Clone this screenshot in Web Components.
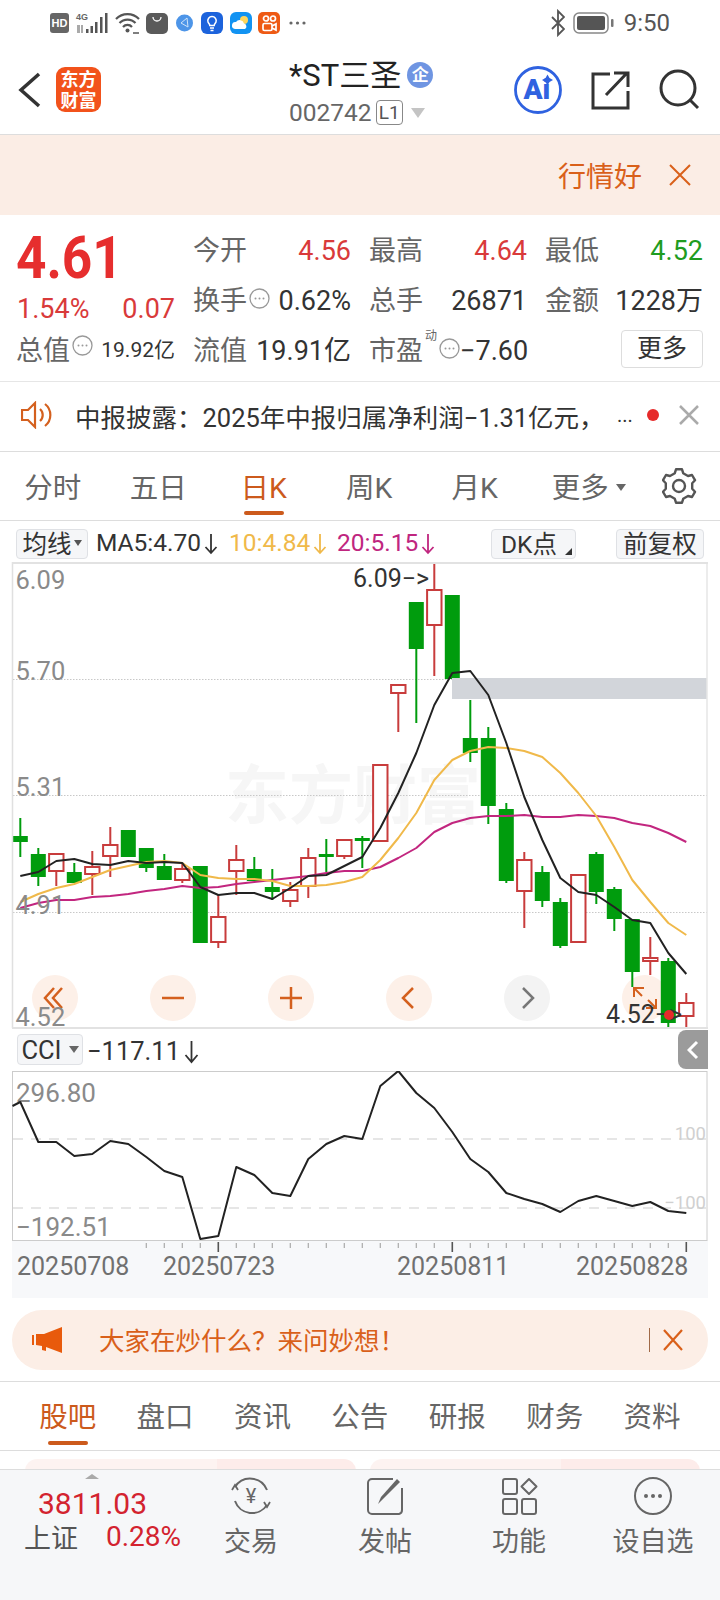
<!DOCTYPE html>
<html lang="zh-CN">
<head>
<meta charset="utf-8">
<title>*ST三圣</title>
<style>
  html, body { margin: 0; padding: 0; background: #fff; }
  body {
    width: 720px; height: 1600px; overflow: hidden;
    font-family: Roboto, "Noto Sans CJK SC", sans-serif;
    color: #333;
  }
</style>
</head>
<body>
<status-bar></status-bar>
<stock-header></stock-header>
<promo-strip></promo-strip>
<quote-panel></quote-panel>
<notice-row></notice-row>

<tab-strip gear style="--tab-top:17px;--bar-gap:2px">
  <tab-item>分时</tab-item>
  <tab-item>五日</tab-item>
  <tab-item active>日K</tab-item>
  <tab-item>周K</tab-item>
  <tab-item>月K</tab-item>
  <tab-item>更多<i style="display:inline-block;width:0;height:0;margin:0 -17px 5px 7px;vertical-align:middle;border:5px solid transparent;border-top:7px solid #666;border-bottom:0"></i></tab-item>
</tab-strip>

<chart-toolbar></chart-toolbar>
<kline-chart></kline-chart>
<cci-head></cci-head>
<cci-chart></cci-chart>
<ask-banner></ask-banner>

<tab-strip style="--tab-w:97.4px;--tab-pad:19px;--tab-top:16px;--bar-gap:3px">
  <tab-item active>股吧</tab-item>
  <tab-item>盘口</tab-item>
  <tab-item>资讯</tab-item>
  <tab-item>公告</tab-item>
  <tab-item>研报</tab-item>
  <tab-item>财务</tab-item>
  <tab-item>资料</tab-item>
</tab-strip>

<card-peek></card-peek>

<bottom-nav>
  <nav-item>
    <svg slot="icon" width="44" height="40" viewBox="0 0 44 40" fill="none" stroke="#666" stroke-width="2">
      <path d="M6 11A18 18 0 0 1 38 14M38 29A18 18 0 0 1 6 25"/>
      <path d="M3 14l3-5 3 5M35 26l3 5 3-5" stroke-width="1.8"/>
      <text x="22" y="27" text-anchor="middle" font-size="20" fill="#666" stroke="none" font-family="Roboto">¥</text>
    </svg>
    交易
  </nav-item>
  <nav-item>
    <svg slot="icon" width="40" height="40" viewBox="0 0 40 40" fill="none" stroke="#666" stroke-width="2">
      <path d="M28 3H7a4 4 0 0 0-4 4v27a4 4 0 0 0 4 4h27a4 4 0 0 0 3-4V12"/>
      <path d="M13 28l3-7 16-18 3 3-17 17z" fill="#666" stroke="none"/>
    </svg>
    发帖
  </nav-item>
  <nav-item>
    <svg slot="icon" width="40" height="40" viewBox="0 0 40 40" fill="none" stroke="#666" stroke-width="2">
      <rect x="4" y="3" width="14" height="15" rx="2"/>
      <rect x="4" y="23" width="14" height="15" rx="2"/>
      <rect x="23" y="23" width="14" height="15" rx="2"/>
      <path d="M30 3l7.500 7.500-7.500 7.500-7.500-7.500z" stroke-linejoin="round"/>
    </svg>
    功能
  </nav-item>
  <nav-item>
    <svg slot="icon" width="40" height="40" viewBox="0 0 40 40" fill="none" stroke="#666" stroke-width="2">
      <circle cx="20" cy="20" r="18"/>
      <g fill="#666" stroke="none"><circle cx="13" cy="20" r="2"/><circle cx="20" cy="20" r="2"/><circle cx="27" cy="20" r="2"/></g>
    </svg>
    设自选
  </nav-item>
</bottom-nav>

<script>
const BASE_FONT = `font-family: Roboto, "Noto Sans CJK SC", sans-serif;`;

// Shared base: renders a static html string into an open shadow root
class ShadowBlock extends HTMLElement {
  connectedCallback() {
    if (this.shadowRoot) return;
    this.attachShadow({ mode: 'open' });
    this.shadowRoot.innerHTML = this.render();
  }
  render() { return ''; }
}

// ============================================================
// <status-bar>: system icons and clock
// ============================================================
class StatusBar extends ShadowBlock {
  render() {
    return `
      <style>
        :host { display: flex; align-items: center; height: 45px; padding-left: 50px; ${BASE_FONT} }
        svg { display: block; flex: none; }
        .hd {
          width: 19px; height: 20px; border-radius: 3px; background: #666; color: #fff;
          font: 700 11px/20px "Liberation Sans", sans-serif; text-align: center;
        }
        .net { position: relative; width: 33px; height: 22px; margin-left: 7px; }
        .net b { position: absolute; left: 0; top: 0; font: 700 9px/10px "Liberation Sans", sans-serif; color: #666; }
        .net svg { position: absolute; left: 0; top: 0; }
        .clock { margin-left: 10px; font-size: 24px; color: #555; }
        .clock-wrap { margin-left: auto; margin-right: 50px; display: flex; align-items: center; }
      </style>
      <div class="hd">HD</div>
      <div class="net"><b>4G</b>
        <svg width="33" height="22" fill="#555">
          <rect x="1" y="13" width="3" height="8" fill="#aaa"/><rect x="5" y="13" width="2" height="8" fill="#aaa"/>
          <rect x="10" y="17" width="2.500" height="4"/><rect x="14.500" y="14" width="2.500" height="7"/>
          <rect x="19" y="10" width="2.500" height="11"/><rect x="24" y="5" width="2.500" height="16"/><rect x="29" y="1" width="2.500" height="20"/>
        </svg>
      </div>
      <svg style="margin-left:6px" width="25" height="22" fill="none" stroke="#555" stroke-width="2.200">
        <path d="M1 7a16 16 0 0 1 23 0M4.500 11a11 11 0 0 1 16 0M8 15a6 6 0 0 1 9 0"/>
        <circle cx="12.500" cy="18.500" r="2" fill="#555" stroke="none"/>
        <path d="M18 21h6" stroke-width="1.500"/>
      </svg>
      <svg style="margin-left:6px" width="22" height="22">
        <path d="M5 1h12a5 5 0 0 1 5 5v11a5 5 0 0 1-5 5H5a5 5 0 0 1-5-5V6a5 5 0 0 1 5-5z" fill="#5a5a5a"/>
        <path d="M7 5a4 4 0 0 0 8 0" fill="none" stroke="#fff" stroke-width="1.300"/>
      </svg>
      <svg style="margin-left:8px" width="17" height="20">
        <circle cx="8.500" cy="10" r="8.500" fill="#4d95e8"/>
        <path d="M11 5L5 10l7 4z" fill="none" stroke="#cfe4fa" stroke-width="1"/>
      </svg>
      <svg style="margin-left:8px" width="22" height="22">
        <rect width="22" height="22" rx="6" fill="#1c63dc"/>
        <path d="M7 10a4.200 4.200 0 1 1 8 0c-.5 1.500-1.800 2-1.800 3.500h-4.400C8.800 12 7.500 11.500 7 10zM9 16h4M9.500 18.500h3" fill="none" stroke="#fff" stroke-width="1.500"/>
      </svg>
      <svg style="margin-left:7px" width="22" height="22">
        <rect width="22" height="22" rx="6" fill="#1293f2"/>
        <circle cx="14" cy="8" r="4" fill="#ffd65c"/>
        <path d="M5 17a3.500 3.500 0 0 1 1-7 4.500 4.500 0 0 1 8 1.500A3 3 0 0 1 15 17z" fill="#fff"/>
      </svg>
      <svg style="margin-left:6px" width="22" height="22">
        <rect width="22" height="22" rx="5" fill="#ee5a14"/>
        <g fill="none" stroke="#fff" stroke-width="1.700">
          <circle cx="8" cy="6.500" r="2.500"/><circle cx="15" cy="6.500" r="2.500"/>
          <rect x="5" y="11.500" width="9" height="7" rx="1.500"/><path d="M14 14l4-2v6l-4-2"/>
        </g>
      </svg>
      <svg style="margin-left:9px" width="17" height="6" fill="#666">
        <circle cx="2" cy="3" r="1.600"/><circle cx="8.500" cy="3" r="1.600"/><circle cx="15" cy="3" r="1.600"/>
      </svg>
      <div class="clock-wrap">
        <svg width="14" height="28" fill="none" stroke="#555" stroke-width="1.800">
          <path d="M1 8l12 12-6 6V2l6 6L1 20"/>
        </svg>
        <svg style="margin-left:8px" width="41" height="22">
          <rect x="1" y="1" width="34" height="20" rx="5" fill="none" stroke="#888" stroke-width="1.500"/>
          <rect x="4" y="4" width="28" height="14" rx="2" fill="#555"/>
          <rect x="38" y="7" width="2.500" height="8" rx="1" fill="#777"/>
        </svg>
        <div class="clock">9:50</div>
      </div>
    `;
  }
}
customElements.define('status-bar', StatusBar);

// ============================================================
// <stock-header>: back button, logo, stock name, actions
// ============================================================
class StockHeader extends ShadowBlock {
  render() {
    return `
      <style>
        :host {
          display: flex; align-items: center; position: relative; height: 89px;
          border-bottom: 1px solid #ddd; padding-left: 18px; box-sizing: content-box; ${BASE_FONT}
        }
        svg { display: block; flex: none; }
        .logo {
          width: 45px; height: 45px; margin-left: 15px; border-radius: 9px; background: #f2521b; color: #fff;
          font-size: 18px; font-weight: 700; line-height: 21px; text-align: center;
          display: flex; align-items: center; justify-content: center; flex: none;
        }
        .mid { width: 200px; margin-left: 188px; flex: none; }
        .name { display: flex; align-items: center; height: 38px; margin-top: 5px; font-size: 31px; color: #222; line-height: 38px; }
        .ent {
          width: 26px; height: 26px; border-radius: 50%; background: #6f95e2; color: #fff; margin: 0 0 1px 6px;
          font-size: 17px; font-weight: 700; line-height: 26px; text-align: center;
        }
        .code { display: flex; align-items: center; height: 30px; margin-top: 3px; font-size: 24.500px; color: #666; }
        .lv {
          width: 25px; height: 23px; margin-left: 4px; border: 1px solid #888; border-radius: 4px;
          font-size: 19px; line-height: 23px; text-align: center; color: #555;
        }
        .tri { width: 0; height: 0; margin-left: 8px; border: 7.500px solid transparent; border-top: 10px solid #c4c4c4; border-bottom: 0; }
      </style>
      <svg width="23" height="36" fill="none" stroke="#333" stroke-width="3.500"><path d="M21 2L3 18l18 16"/></svg>
      <div class="logo">东方<br>财富</div>
      <div class="mid">
        <div class="name">*ST三圣<span class="ent">企</span></div>
        <div class="code">002742<span class="lv">L1</span><span class="tri"></span></div>
      </div>
      <svg style="margin-left:24px" width="50" height="50" fill="none">
        <circle cx="25" cy="25" r="22.500" stroke="#2f62e0" stroke-width="2.800"/>
        <text x="10.500" y="34" font-family="Roboto" font-weight="900" font-size="28" fill="#2f62e0">Ai</text>
        <path d="M34.500 9.500l2 3.500 3.500 2-3.500 2-2 3.500-2-3.500-3.500-2 3.500-2z" fill="#2f62e0"/>
      </svg>
      <svg style="margin-left:27px" width="40" height="40" fill="none" stroke="#333" stroke-width="3">
        <path d="M20 4H3v34h35V21M16 25L37 3M24 3h14v14"/>
      </svg>
      <svg style="margin-left:29px" width="42" height="42" fill="none" stroke="#333" stroke-width="3">
        <circle cx="19" cy="19" r="17"/><path d="M31 31l8 8"/>
      </svg>
    `;
  }
}
customElements.define('stock-header', StockHeader);

// ============================================================
// <promo-strip>: market sentiment bar
// ============================================================
class PromoStrip extends ShadowBlock {
  render() {
    return `
      <style>
        :host {
          display: flex; align-items: center; justify-content: flex-end; height: 80px; background: #fbede5;
          padding-right: 29px; color: #d9601a; font-size: 28px; ${BASE_FONT}
        }
        svg { display: block; margin-left: 27px; }
      </style>
      <span>行情好</span>
      <svg width="22" height="22" fill="none" stroke="#d9601a" stroke-width="2"><path d="M1 1l20 20M21 1L1 21"/></svg>
    `;
  }
}
customElements.define('promo-strip', PromoStrip);

// ============================================================
// <quote-panel>: last price plus the fundamentals grid
// ============================================================
class QuotePanel extends ShadowBlock {
  render() {
    const more = `<svg class="dot" width="21" height="21" fill="none" stroke="#999" stroke-width="1.300"><circle cx="10.500" cy="10.500" r="9.500"/><g fill="#999" stroke="none"><circle cx="6.500" cy="10.500" r="1"/><circle cx="10.500" cy="10.500" r="1"/><circle cx="14.500" cy="10.500" r="1"/></g></svg>`;
    const cell = (label, value, cls = '') =>
      `<div class="cell"><span class="lab">${label}</span><span class="val ${cls}">${value}</span></div>`;
    return `
      <style>
        :host {
          display: grid; grid-template-columns: repeat(4, 158px); column-gap: 18px; grid-auto-rows: 50px;
          height: 155px; padding: 11px 0 0 17px; border-bottom: 1px solid #e6e6e6; box-sizing: content-box; ${BASE_FONT}
        }
        .left { grid-row: 1 / 4; grid-column: 1; display: flex; flex-direction: column; }
        .price {
          height: 64px; line-height: 64px; font-size: 59px; font-weight: 700; color: #e62e2e;
          transform: scaleX(.9); transform-origin: left center; margin-left: -1px;
        }
        .chg { display: flex; justify-content: space-between; height: 38px; line-height: 38px; font-size: 27px; color: #d93a3a; }
        .cap { display: flex; align-items: center; height: 40px; font-size: 27px; color: #666; margin-left: -1px; }
        .cap .small { margin-left: auto; font-size: 21px; color: #333; }
        .cell { display: flex; align-items: center; justify-content: space-between; font-size: 27px; line-height: 49px; }
        .lab { color: #666; display: flex; align-items: center; white-space: nowrap; }
        .val { color: #333; white-space: nowrap; }
        .up { color: #d93a3a; }
        .down { color: #1f9c1f; }
        .dot { display: block; flex: none; margin: -6px 0 0 2px; }
        sup { font-size: 12px; line-height: 12px; color: #666; align-self: flex-start; margin: 3px 0 0 2px; }
        .btn {
          width: 80px; height: 36px; margin: -5px 0 0 auto; border: 1px solid #ddd; border-radius: 4px;
          font-size: 25px; line-height: 36px; text-align: center; color: #333;
        }
      </style>
      <div class="left">
        <div class="price">4.61</div>
        <div class="chg"><span>1.54%</span><span>0.07</span></div>
        <div class="cap">总值${more}<span class="small">19.92亿</span></div>
      </div>
      ${cell('今开', '4.56', 'up')}
      ${cell('最高', '4.64', 'up')}
      ${cell('最低', '4.52', 'down')}
      ${cell('换手' + more, '0.62%')}
      ${cell('总手', '26871')}
      ${cell('金额', '1228万')}
      ${cell('流值', '19.91亿')}
      ${cell('市盈<sup>动</sup>' + more, '−7.60')}
      <div class="cell"><div class="btn">更多</div></div>
    `;
  }
}
customElements.define('quote-panel', QuotePanel);

// ============================================================
// <notice-row>: scrolling announcement
// ============================================================
class NoticeRow extends ShadowBlock {
  render() {
    return `
      <style>
        :host {
          display: flex; align-items: center; padding: 0 0 3px 21px; box-sizing: border-box;
          height: 70px; border-bottom: 1px solid #ddd; font-size: 25.500px; color: #333; ${BASE_FONT}
        }
        svg { display: block; flex: none; }
        .txt { margin-left: 22px; white-space: nowrap; width: 521px; flex: none; }
        .dots { margin-left: 21px; width: 15px; flex: none; font-size: 20px; }
        .red { width: 12px; height: 12px; border-radius: 50%; background: #e62a2a; margin-left: 15px; flex: none; }
      </style>
      <svg width="32" height="28" fill="none" stroke="#d4601e" stroke-width="2.200">
        <path d="M1 9h6l7-7v24l-7-7H1zM19 8a8 8 0 0 1 0 12M24 3a14 14 0 0 1 0 22"/>
      </svg>
      <div class="txt">中报披露：2025年中报归属净利润−1.31亿元，</div>
      <div class="dots">...</div>
      <div class="red"></div>
      <svg style="margin-left:20px" width="20" height="20" fill="none" stroke="#aaa" stroke-width="2.500"><path d="M1 1l18 18M19 1L1 19"/></svg>
    `;
  }
}
customElements.define('notice-row', NoticeRow);

// ============================================================
// <tab-strip> + <tab-item>: horizontal tabs, content via slots
// ============================================================
function gearPath(cx, cy, outer, inner, teeth) {
  let d = '';
  const step = Math.PI * 2 / teeth;
  for (let i = 0; i < teeth; i++) {
    const a = -Math.PI / 2 + i * step;
    const pts = [[a - step * .17, outer], [a + step * .17, outer], [a + step * .3, inner], [a + step * .7, inner]];
    pts.forEach(([t, r], k) => {
      d += (i === 0 && k === 0 ? 'M' : 'L') + (cx + r * Math.cos(t)).toFixed(1) + ' ' + (cy + r * Math.sin(t)).toFixed(1);
    });
  }
  return d + 'z';
}

class TabStrip extends ShadowBlock {
  render() {
    const gear = this.hasAttribute('gear')
      ? `<svg width="36" height="38" fill="none" stroke="#555" stroke-width="2.400" stroke-linejoin="round">
           <path d="${gearPath(17, 18, 17, 13.5, 6)}"/><circle cx="17" cy="18" r="6"/>
         </svg>`
      : '';
    return `
      <style>
        :host {
          display: flex; height: 68px; padding-left: var(--tab-pad, 0); position: relative;
          border-bottom: 1px solid #ddd; ${BASE_FONT}
        }
        svg { display: block; margin: 16px 0 0 29px; flex: none; }
      </style>
      <slot></slot>${gear}
    `;
  }
}
customElements.define('tab-strip', TabStrip);

class TabItem extends ShadowBlock {
  render() {
    return `
      <style>
        :host {
          display: flex; flex-direction: column; align-items: center; flex: none;
          width: var(--tab-w, 105.500px); padding-top: var(--tab-top, 15px); box-sizing: border-box;
          font-size: 28.500px; line-height: 40px; color: #666;
        }
        :host([active]) { color: #cc5a1c; }
        .bar { width: 40px; height: 4px; margin-top: var(--bar-gap, 4px); border-radius: 2px; }
        :host([active]) .bar { background: #cc5a1c; }
      </style>
      <div><slot></slot></div>
      <div class="bar"></div>
    `;
  }
}
customElements.define('tab-item', TabItem);

// ============================================================
// <chart-toolbar>: indicator selector and moving average values
// ============================================================
class ChartToolbar extends ShadowBlock {
  render() {
    return `
      <style>
        :host {
          display: flex; align-items: center; height: 41px; padding: 5px 16px 0; box-sizing: border-box;
          font-size: 24.500px; color: #333; ${BASE_FONT}
        }
        .pill {
          display: flex; align-items: center; justify-content: center; height: 30px; box-sizing: border-box;
          background: #f5f6f8; border: 1px solid #dfe1e5; border-radius: 4px; font-size: 24.500px; position: relative; flex: none;
          padding-bottom: 3px;
        }
        .ma { white-space: nowrap; display: flex; align-items: center; margin-top: -3px; }
        .ma svg { display: block; margin-left: 3px; }
        .tri { display: inline-block; width: 0; height: 0; margin-left: 2px; border: 4px solid transparent; border-top: 6px solid #555; border-bottom: 0; }
        .corner { position: absolute; right: 3px; bottom: 3px; width: 0; height: 0; border-left: 7px solid transparent; border-bottom: 7px solid #333; }
      </style>
      <div class="pill" style="width:72px">均线<span class="tri"></span></div>
      <div class="ma" style="margin-left:8px;width:133px">MA5:4.70${this.arrow('#333')}</div>
      <div class="ma" style="width:108px;color:#f0b94a">10:4.84${this.arrow('#f0b94a')}</div>
      <div class="ma" style="color:#c0267f;width:154px">20:5.15${this.arrow('#c0267f')}</div>
      <div class="pill" style="width:85px;justify-content:flex-start;padding-left:9px">DK点<span class="corner"></span></div>
      <div class="pill" style="width:88px;margin-left:40px">前复权</div>
    `;
  }
  arrow(c) {
    return `<svg width="14" height="24" fill="none" stroke="${c}" stroke-width="1.800"><path d="M7 3v19M1.500 16L7 22l5.500-6"/></svg>`;
  }
}
customElements.define('chart-toolbar', ChartToolbar);

// ============================================================
// <kline-chart>: candlesticks, moving averages and controls
// Coordinates are in page pixels; the viewBox handles the offset.
// ============================================================
const slotX = i => 20.3 + 18 * i;

// [kind, wickTop, wickBottom, bodyTop, bodyBottom]; g = falling, r = rising
const CANDLES = [
  ['g',818,857,836,842], ['g',848,886,854,877], ['r',853,886,853,872], ['g',863,883,872,883],
  ['r',851,895,866,875], ['r',827,877,844,857], ['g',830,857,830,857], ['g',848,872,848,868],
  ['g',854,880,866,880], ['r',863,883,868,881], ['g',866,943,866,943], ['r',895,948,916,943],
  ['r',845,895,859,872], ['g',857,881,869,881], ['g',869,900,887,892], ['r',882,907,889,902],
  ['r',848,898,857,887], ['g',839,872,854,857], ['r',839,859,839,857], ['g',836,868,838,841],
  ['r',764,842,764,842], ['r',684,732,684,694], ['g',602,723,602,649], ['r',563,676,589,626],
  ['g',595,679,595,679], ['g',700,762,738,753], ['g',727,824,738,806], ['g',803,883,809,881],
  ['r',852,928,859,892], ['g',866,907,872,901], ['g',898,948,902,946], ['r',874,943,874,943],
  ['g',852,904,854,892], ['g',887,931,889,919], ['g',919,987,919,972], ['r',937,975,957,962],
  ['g',958,1029,961,1023], ['r',993,1029,1002,1017],
];

const MA5 = [876,872,861,859,864,865,861,863,862,863,887,895,893,893,899,888,876,875,866,857,
  828,793,753,705,673,671,695,743,797,840,878,892,895,907,920,923,953,974];
const MA10 = [902,894,888,884,877,870,866,862,861,863,875,878,879,879,881,886,886,885,882,877,
  860,838,813,780,760,751,747,748,751,757,773,793,816,847,880,902,923,935];
const MA20 = [908,903,900,900,897,896,894,891,889,886,888,887,884,882,880,878,876,873,871,871,
  867,858,848,832,823,818,816,816,815,817,817,815,816,818,823,826,833,842];

const linePoints = ys => ys.map((y, i) => `${slotX(i).toFixed(1)},${y}`).join(' ');

class KlineChart extends ShadowBlock {
  render() {
    const GREEN = '#009c0d', RED = '#c83c3c';
    const candles = CANDLES.map(([kind, wt, wb, bt, bb], i) => {
      const x = slotX(i);
      if (kind === 'g') {
        return `<path d="M${x} ${wt}V${wb}" stroke="${GREEN}" stroke-width="2"/>
                <rect x="${x - 7.5}" y="${bt}" width="15" height="${bb - bt}" fill="${GREEN}"/>`;
      }
      return `<path d="M${x} ${wt}V${bt}M${x} ${bb}V${wb}" stroke="${RED}" stroke-width="2"/>
              <rect x="${x - 7.2}" y="${bt + 1}" width="14.4" height="${Math.max(bb - bt - 2, 1)}" fill="#fff" stroke="${RED}" stroke-width="2"/>`;
    }).join('');

    const btn = (cx, fill) => `<circle cx="${cx}" cy="998" r="23" fill="${fill}"/>`;
    const label = (y, t) => `<text x="15.500" y="${y}" class="axis">${t}</text>`;

    return `
      <style>
        :host { display: block; height: 468px; }
        svg { display: block; overflow: visible; }
        text { font-family: Roboto, "Noto Sans CJK SC", sans-serif; }
        .axis { font-size: 25.500px; fill: #8a8a8a; }
        .mark { font-size: 25px; fill: #333; }
        .wm { font-size: 64px; font-weight: 700; fill: #f6f6f6; }
      </style>
      <svg width="720" height="468" viewBox="0 562 720 468" fill="none">
        <defs><clipPath id="plot"><rect x="13" y="563" width="694" height="464"/></clipPath></defs>
        <text x="225" y="818" class="wm">东方财富</text>
        <g stroke="#c8c8c8" stroke-width="1" stroke-dasharray="1.500 1.500">
          <path d="M13 679.500H707M13 795.500H707M13 912.500H707"/>
        </g>
        ${btn(55, '#fdf0e8')}${btn(173, '#fdf0e8')}${btn(291, '#fdf0e8')}${btn(409, '#fdf0e8')}${btn(527, '#f3f3f3')}${btn(645, '#fdf0e8')}
        <g stroke="#d4601e" stroke-width="2.500">
          <path d="M54 988L45 998L54 1008M62 988L53 998L62 1008"/>
          <path d="M162 998H184M280 998H302M291 987V1009"/>
          <path d="M413 988L403 998L413 1008"/>
          <path d="M634 997V988H644M634 988L642 996M656 999V1008H646M656 1008L648 1000" stroke-width="2"/>
        </g>
        <path d="M523 988L533 998L523 1008" stroke="#777" stroke-width="2.500"/>
        <g clip-path="url(#plot)">
          ${candles}
          <rect x="452" y="678" width="255" height="21" fill="#d2d5da"/>
          <polyline points="${linePoints(MA20)}" stroke="#c2267f" stroke-width="2" stroke-linejoin="round"/>
          <polyline points="${linePoints(MA10)}" stroke="#f0b94a" stroke-width="2" stroke-linejoin="round"/>
          <polyline points="${linePoints(MA5)}" stroke="#222" stroke-width="2" stroke-linejoin="round"/>
        </g>
        <path d="M12.500 562V1028" stroke="#e0e0e0" stroke-width="1.500"/>
        <path d="M707 562V1028" stroke="#e6e6e6" stroke-width="1.500"/>
        <path d="M12 563H708M12 1028H708" stroke="#e2e2e2" stroke-width="2"/>
        ${label(589, '6.09')}${label(680, '5.70')}${label(796, '5.31')}${label(914, '4.91')}${label(1026, '4.52')}
        <text x="353" y="587" class="mark">6.09−&gt;</text>
        <text x="606" y="1023" class="mark">4.52−&gt;</text>
        <circle cx="669" cy="1015" r="5" fill="#e62a2a"/>
      </svg>
    `;
  }
}
customElements.define('kline-chart', KlineChart);

// ============================================================
// <cci-head>: indicator selector above the lower chart
// ============================================================
class CciHead extends ShadowBlock {
  render() {
    return `
      <style>
        :host { display: flex; align-items: flex-start; height: 41px; padding-left: 17px; font-size: 25.500px; color: #333; ${BASE_FONT} }
        .pill {
          display: flex; align-items: center; justify-content: center; width: 66px; height: 31px; margin-top: 4px; box-sizing: border-box;
          background: #f5f6f8; border: 1px solid #dfe1e5; border-radius: 4px; flex: none;
        }
        .tri { width: 0; height: 0; margin-left: 7px; border: 5px solid transparent; border-top: 7px solid #666; border-bottom: 0; }
        .val { display: flex; align-items: center; height: 31px; margin: 5px 0 0 4px; white-space: nowrap; }
        .val svg { display: block; margin-left: 4px; }
        .side {
          display: flex; align-items: center; justify-content: center; width: 30px; height: 39px;
          margin-left: auto; margin-right: 12px; background: #9b9b9b; border-radius: 8px 0 0 8px; flex: none;
        }
      </style>
      <div class="pill">CCI<span class="tri"></span></div>
      <div class="val">−117.11<svg width="15" height="26" fill="none" stroke="#333" stroke-width="1.800"><path d="M7.500 3v21M1.500 17L7.500 24l6-7"/></svg></div>
      <div class="side"><svg width="12" height="20" fill="none" stroke="#fff" stroke-width="3"><path d="M10 2L2 10l8 8"/></svg></div>
    `;
  }
}
customElements.define('cci-head', CciHead);

// ============================================================
// <cci-chart>: oscillator line and date axis
// ============================================================
const CCI = [1102,1142,1142,1156,1154,1141,1144,1157,1171,1177,1239,1236,1167,1175,1193,1196,1159,1144,1136,1139,
  1086,1071,1093,1108,1132,1159,1172,1193,1199,1204,1212,1201,1196,1201,1206,1202,1211,1213];

class CciChart extends ShadowBlock {
  render() {
    const pts = '12.5,1106 ' + linePoints(CCI);
    let ticks = '';
    for (let i = 7; i < CCI.length; i++) {
      const major = i === 11 || i === 24 || i === 37;
      ticks += `<path d="M${slotX(i)} ${major ? 1242 : 1243}V${major ? 1252 : 1248}" stroke="${major ? '#555' : '#aaa'}" stroke-width="${major ? 1.6 : 1.2}"/>`;
    }
    return `
      <style>
        :host { display: block; height: 227px; }
        svg { display: block; }
        text { font-family: Roboto, "Noto Sans CJK SC", sans-serif; }
        .axis { font-size: 26px; fill: #8a8a8a; }
        .lvl { font-size: 18.500px; fill: #d0d0d0; text-anchor: end; }
        .date { font-size: 25px; fill: #707070; }
      </style>
      <svg width="720" height="227" viewBox="0 1071 720 227" fill="none">
        <rect x="12" y="1240" width="696" height="58" fill="#f7f8fa"/>
        <rect x="12.500" y="1071.500" width="694.500" height="169" stroke="#ccc" stroke-width="1"/>
        <path d="M13 1139H706M13 1208H706" stroke="#e6e6e6" stroke-width="2" stroke-dasharray="10 8"/>
        <text x="16" y="1102" class="axis">296.80</text>
        <text x="16" y="1236" class="axis">−192.51</text>
        <text x="706" y="1140" class="lvl">100</text>
        <text x="706" y="1209" class="lvl">−100</text>
        <polyline points="${pts}" stroke="#222" stroke-width="2" stroke-linejoin="round"/>
        ${ticks}
        <text x="17" y="1275" class="date">20250708</text>
        <text x="163" y="1275" class="date">20250723</text>
        <text x="397" y="1275" class="date">20250811</text>
        <text x="576" y="1275" class="date">20250828</text>
      </svg>
    `;
  }
}
customElements.define('cci-chart', CciChart);

// ============================================================
// <ask-banner>: rounded call-to-action bar
// ============================================================
class AskBanner extends ShadowBlock {
  render() {
    return `
      <style>
        :host {
          display: block; padding: 12px 12px 0; box-sizing: content-box;
          height: 71px; border-bottom: 1px solid #ddd; ${BASE_FONT}
        }
        .bar {
          display: flex; align-items: center; height: 60px; border-radius: 30px; background: #fceee6;
          padding-left: 20px; color: #d9601a; font-size: 25.500px; white-space: nowrap;
        }
        svg { display: block; flex: none; }
        .txt { margin: -4px 0 0 37px; }
        .sep { width: 1px; height: 24px; background: #a06a48; margin-left: auto; flex: none; }
      </style>
      <div class="bar">
        <svg width="30" height="26" fill="#e85a0c">
          <rect x="0" y="8" width="2" height="10"/>
          <path d="M4 7h8L30 0v26l-16-6v4l-4-1v-4l-6-1z"/>
        </svg>
        <span class="txt">大家在炒什么？来问妙想！</span>
        <span class="sep"></span>
        <svg style="margin:0 25px 0 13px" width="20" height="22" fill="none" stroke="#d9601a" stroke-width="2.200"><path d="M1 1l18 20M19 1L1 21"/></svg>
      </div>
    `;
  }
}
customElements.define('ask-banner', AskBanner);

// ============================================================
// <card-peek>: tops of the two feed cards under the tab bar
// ============================================================
class CardPeek extends ShadowBlock {
  render() {
    return `
      <style>
        :host { display: flex; gap: 14px; height: 18px; padding: 8px 20px 0 25px; box-sizing: border-box; overflow: hidden; }
        div { flex: 1; height: 40px; border-radius: 12px; background: linear-gradient(90deg, #fdf3f1 58%, #fdecea 58%); }
      </style>
      <div></div><div></div>
    `;
  }
}
customElements.define('card-peek', CardPeek);

// ============================================================
// <bottom-nav> + <nav-item>: index ticker and action buttons
// ============================================================
class BottomNav extends ShadowBlock {
  render() {
    return `
      <style>
        :host {
          display: flex; height: 131px; box-sizing: border-box; background: #f6f7f9;
          border-top: 1px solid #ddd; ${BASE_FONT}
        }
        .index { width: 184px; flex: none; position: relative; box-sizing: border-box; padding: 4px 0 0 24px; }
        .tick { width: 0; height: 0; margin: 0 0 0 61px; border: 7px solid transparent; border-bottom: 5px solid #aaa; border-top: 0; }
        .num { margin: 6px 0 0 14px; font-size: 30px; line-height: 38px; color: #d3232f; }
        .row { display: flex; align-items: center; height: 30px; margin-top: -2px; font-size: 27px; color: #555; }
        .row b { margin-left: 28px; font-weight: 400; font-size: 28px; color: #d3232f; }
      </style>
      <div class="index">
        <div class="tick"></div>
        <div class="num">3811.03</div>
        <div class="row">上证<b>0.28%</b></div>
      </div>
      <slot></slot>
    `;
  }
}
customElements.define('bottom-nav', BottomNav);

class NavItem extends ShadowBlock {
  render() {
    return `
      <style>
        :host {
          display: flex; flex-direction: column; align-items: center; flex: none; width: 134px;
          font-size: 27px; line-height: 40px; color: #666;
        }
        .ico { display: flex; align-items: center; justify-content: center; height: 52px; }
      </style>
      <div class="ico"><slot name="icon"></slot></div>
      <div><slot></slot></div>
    `;
  }
}
customElements.define('nav-item', NavItem);
</script>
</body>
</html>
